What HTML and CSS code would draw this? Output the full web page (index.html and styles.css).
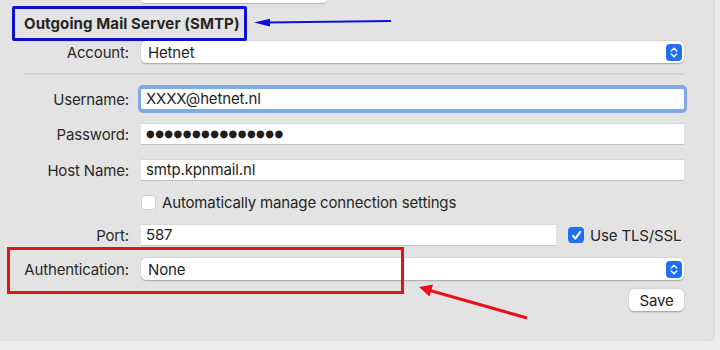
FILE: index.html
```html
<!DOCTYPE html>
<html>
<head>
<meta charset="utf-8">
<link rel="stylesheet" href="styles.css">
</head>
<body>
<div class="panel">
  <div class="topbtn"></div>
  <h2 class="heading">Outgoing Mail Server (SMTP)</h2>
  <div class="row row-account">
    <label class="lbl">Account:</label>
    <div class="popup"><span>Hetnet</span><span class="stepper"><svg width="8" height="11" viewBox="0 0 8 11"><path d="M1.2 4 L4 1.3 L6.8 4 M1.2 7 L4 9.7 L6.8 7" fill="none" stroke="#fff" stroke-width="1.4" stroke-linecap="round" stroke-linejoin="round"/></svg></span></div>
  </div>
  <div class="sep"></div>
  <div class="row row-user">
    <label class="lbl">Username:</label>
    <div class="field focus">XXXX@hetnet.nl</div>
  </div>
  <div class="row row-pass">
    <label class="lbl">Password:</label>
    <div class="field dots">●●●●●●●●●●●●●●●</div>
  </div>
  <div class="row row-host">
    <label class="lbl">Host Name:</label>
    <div class="field">smtp.kpnmail.nl</div>
  </div>
  <div class="row row-check">
    <span class="lbl"></span>
    <div class="check"><span class="box"></span><span>Automatically manage connection settings</span></div>
  </div>
  <div class="row row-port">
    <label class="lbl">Port:</label>
    <div class="field port">587</div>
    <div class="check tls"><span class="box on"><svg width="13" height="13" viewBox="0 0 13 13"><path d="M3 6.8 L5.4 9.6 L10.2 2.8" fill="none" stroke="#fff" stroke-width="2" stroke-linecap="round" stroke-linejoin="round"/></svg></span><span>Use TLS/SSL</span></div>
  </div>
  <div class="row row-auth">
    <label class="lbl">Authentication:</label>
    <div class="popup"><span>None</span><span class="stepper"><svg width="8" height="11" viewBox="0 0 8 11"><path d="M1.2 4 L4 1.3 L6.8 4 M1.2 7 L4 9.7 L6.8 7" fill="none" stroke="#fff" stroke-width="1.4" stroke-linecap="round" stroke-linejoin="round"/></svg></span></div>
  </div>
  <div class="row row-save">
    <button class="save">Save</button>
  </div>
  <svg class="annot" width="720" height="350" viewBox="0 0 720 350">
    <line x1="391" y1="21" x2="266" y2="22.5" stroke="#0b12d6" stroke-width="2"/>
    <polygon points="254,22.6 270,18.8 270,26.4" fill="#0b12d6"/>
    <rect x="8.5" y="248.5" width="394" height="44" fill="none" stroke="#e8101a" stroke-width="3"/>
    <line x1="527" y1="318" x2="430" y2="290.5" stroke="#e8101a" stroke-width="3"/>
    <polygon points="419,287 433,284.5 429.5,296.5" fill="#e8101a"/>
  </svg>
</div>
</body>
</html>
```
FILE: styles.css
```css
* { box-sizing: border-box; }
html, body { margin: 0; padding: 0; }
body {
  background: #ececec;
  width: 720px;
  height: 350px;
  overflow: hidden;
  font-family: Inter, "Liberation Sans", sans-serif;
  font-size: 15px;
  letter-spacing: -0.15px;
  color: #222;
}
.panel {
  position: relative;
  width: 715px;
  height: 341px;
  background: #e3e3e3;
  border-right: 1px solid #dcdcdc;
  border-bottom: 1px solid #dcdcdc;
  border-bottom-right-radius: 6px;
  display: flex;
  flex-direction: column;
}
.topbtn {
  margin-left: 142px;
  width: 184px;
  height: 3px;
  background: #fff;
  border-radius: 0 0 5px 5px;
  box-shadow: 0 1px 1px rgba(0,0,0,0.2);
}
.heading {
  margin: 3px 0 0 12px;
  width: 235px;
  height: 35px;
  border: 3px solid #0b12d6;
  border-radius: 2px;
  padding: 0 0 0 9px;
  font-size: 15px;
  font-weight: 700;
  line-height: 29px;
  color: #262626;
  letter-spacing: 0.1px;
}
.row {
  display: flex;
  align-items: center;
  height: 22px;
}
.lbl {
  width: 129px;
  flex: none;
  text-align: right;
  margin-right: 12px;
  color: #2a2a2a;
}
.popup {
  width: 543px;
  height: 22px;
  background: #fff;
  border-radius: 5px;
  box-shadow: 0 0.5px 1.5px rgba(0,0,0,0.28);
  display: flex;
  align-items: center;
  justify-content: space-between;
  padding: 0 2px 0 7px;
  color: #1e1e1e;
}
.stepper {
  width: 16px;
  height: 17px;
  border-radius: 4px;
  background: #1e6ff2;
  display: flex;
  align-items: center;
  justify-content: center;
}
.stepper svg { display: block; }
.sep {
  margin: 10px 0 0 24px;
  width: 661px;
  height: 2px;
  background: #d3d3d3;
}
.field {
  width: 543px;
  height: 22px;
  background: #fff;
  border-top: 1px solid #d6d6d6;
  border-bottom: 1px solid #c2c2c2;
  padding: 0 5px;
  line-height: 20px;
  color: #1e1e1e;
}
.field.focus {
  box-shadow: 0 0 0 3px #83a8ea;
  border-radius: 2px;
  border-color: #83a8ea;
}
.field.dots {
  font-family: "DejaVu Sans", sans-serif;
  font-size: 10px;
  letter-spacing: 0.45px;
  line-height: 20px;
}
.row-account { margin-top: 0; }
.row-user { margin-top: 13px; }
.row-pass { margin-top: 13px; }
.row-host { margin-top: 14px; }
.row-check { margin-top: 10px; }
.row-port { margin-top: 11px; }
.row-auth { margin-top: 12px; }
.row-save { margin-top: 9px; justify-content: flex-end; width: 684px; }
.check {
  display: flex;
  align-items: center;
  color: #262626;
}
.box {
  width: 15px;
  height: 15px;
  border-radius: 4px;
  background: #fff;
  box-shadow: inset 0 0 0 1px #cfcfcf;
  margin-right: 6px;
  display: flex;
  align-items: center;
  justify-content: center;
}
.box.on {
  width: 16px;
  height: 16px;
  background: #1e6ff2;
  box-shadow: none;
}
.field.port { width: 415px; }
.tls { margin-left: 12px; }
.save {
  font-family: Inter, "Liberation Sans", sans-serif;
  font-size: 15px;
  letter-spacing: -0.15px;
  color: #222;
  width: 55px;
  height: 22px;
  padding: 0;
  border: none;
  background: #fff;
  border-radius: 5px;
  box-shadow: 0 0.5px 1.5px rgba(0,0,0,0.3);
}
.annot {
  position: absolute;
  left: 0;
  top: 0;
  pointer-events: none;
}
```
